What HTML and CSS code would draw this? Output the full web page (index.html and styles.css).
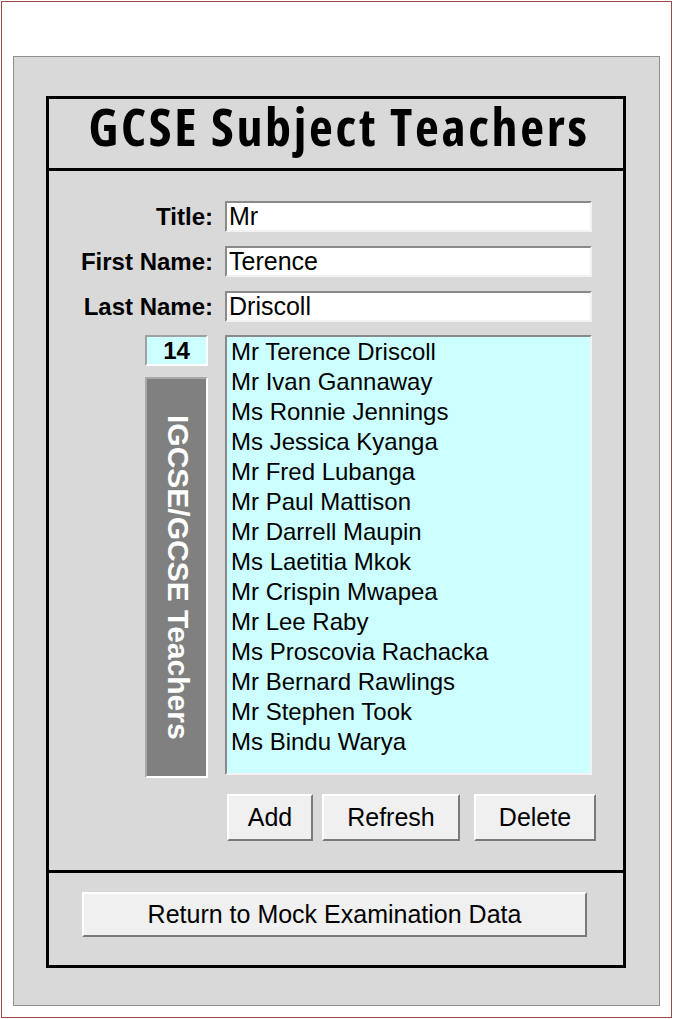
FILE: index.html
```html
<!DOCTYPE html>
<html lang="en">
<head>
  <meta charset="UTF-8" />
  <title>GCSE Subject Teachers</title>
  <link rel="stylesheet" href="styles.css">
</head>
<body>

  <div class="frame">
    <div class="panel">
      <div class="card">

        <!-- Header -->
        <div class="card-header">
          <h1>GCSE Subject Teachers</h1>
        </div>

        <!-- Teacher form -->
        <div class="card-body">
          <label class="field-label" for="title">Title:</label>
          <input class="field" id="title" type="text" value="Mr" />

          <label class="field-label" for="firstName">First Name:</label>
          <input class="field" id="firstName" type="text" value="Terence" />

          <label class="field-label" for="lastName">Last Name:</label>
          <input class="field" id="lastName" type="text" value="Driscoll" />

          <div class="side">
            <div class="count">14</div>
            <div class="side-label"><span>IGCSE/GCSE Teachers</span></div>
          </div>

          <ul class="teacher-list">
            <li>Mr Terence Driscoll</li>
            <li>Mr Ivan Gannaway</li>
            <li>Ms Ronnie Jennings</li>
            <li>Ms Jessica Kyanga</li>
            <li>Mr Fred Lubanga</li>
            <li>Mr Paul Mattison</li>
            <li>Mr Darrell Maupin</li>
            <li>Ms Laetitia Mkok</li>
            <li>Mr Crispin Mwapea</li>
            <li>Mr Lee Raby</li>
            <li>Ms Proscovia Rachacka</li>
            <li>Mr Bernard Rawlings</li>
            <li>Mr Stephen Took</li>
            <li>Ms Bindu Warya</li>
          </ul>

          <div class="actions">
            <button class="btn btn-add">Add</button>
            <button class="btn btn-refresh">Refresh</button>
            <button class="btn btn-delete">Delete</button>
          </div>
        </div>

        <!-- Footer -->
        <div class="card-footer">
          <button class="btn btn-return">Return to Mock Examination Data</button>
        </div>

      </div>
    </div>
  </div>

</body>
</html>
```

FILE: styles.css
```css
* {
  box-sizing: border-box;
  margin: 0;
  padding: 0;
}

body {
  font-family: "Liberation Sans", Arial, sans-serif;
  background: #fff;
  padding: 1px;
}

/* Window frame */
.frame {
  width: 671px;
  height: 1017px;
  border: 1px solid #9c4b4b;
  background: #fff;
  padding: 54px 0 0 11px;
}

.panel {
  width: 647px;
  height: 950px;
  border: 1px solid #8f8f8f;
  background: #d9d9d9;
  padding: 39px 0 0 32px;
}

.card {
  width: 580px;
  height: 872px;
  border: 3px solid #000;
  display: flex;
  flex-direction: column;
}

/* Header */
.card-header {
  height: 72px;
  border-bottom: 3px solid #000;
  display: flex;
  align-items: center;
  justify-content: center;
  padding-bottom: 16px;
}

.card-header h1 {
  font-family: "Open Sans", "Liberation Sans", sans-serif;
  font-stretch: 75%;
  font-weight: bold;
  font-size: 52px;
  letter-spacing: 2.65px;
  line-height: 1;
  white-space: nowrap;
  color: #000;
  padding-left: 6px;
}

/* Form body */
.card-body {
  flex-grow: 1;
  display: grid;
  grid-template-columns: 164px 367px;
  column-gap: 12px;
  row-gap: 14px;
  align-content: start;
  padding-top: 30px;
}

.field-label {
  font-weight: bold;
  font-size: 24px;
  color: #000;
  text-align: right;
  align-self: center;
}

.field {
  height: 31px;
  font-family: "Liberation Sans", Arial, sans-serif;
  font-size: 25px;
  padding: 0 2px;
  background: #fff;
  border: 2px solid;
  border-color: #8a8a8a #f2f2f2 #f2f2f2 #8a8a8a;
  outline: none;
  color: #000;
}

.side {
  width: 63px;
  justify-self: end;
  margin-right: 5px;
  margin-top: -1px;
  display: flex;
  flex-direction: column;
  gap: 11px;
}

.count {
  height: 31px;
  background: #ccffff;
  border: 2px solid;
  border-color: #a0a0a0 #fff #fff #a0a0a0;
  font-weight: bold;
  font-size: 24px;
  text-align: center;
  line-height: 27px;
}

.side-label {
  height: 401px;
  background: #808080;
  border: 2px solid;
  border-color: #a8a8a8 #fff #fff #a8a8a8;
  display: flex;
  align-items: center;
  justify-content: center;
}

.side-label span {
  writing-mode: vertical-rl;
  color: #fff;
  font-weight: bold;
  font-size: 30px;
  white-space: nowrap;
  margin-left: 2px;
}

.teacher-list {
  list-style: none;
  height: 440px;
  margin-top: -1px;
  background: #ccffff;
  border: 2px solid;
  border-color: #8a8a8a #f2f2f2 #f2f2f2 #8a8a8a;
  padding: 0 4px;
}

.teacher-list li {
  font-size: 24px;
  line-height: 30px;
  color: #000;
}

.actions {
  grid-column: 2;
  display: flex;
  margin-top: 2px;
  padding-left: 2px;
}

/* Buttons */
.btn {
  font-family: "Liberation Sans", Arial, sans-serif;
  font-size: 25px;
  color: #000;
  background: #f0f0f0;
  border: 2px solid;
  border-color: #fff #7a7a7a #7a7a7a #fff;
  cursor: pointer;
  flex-shrink: 0;
}

.btn-add {
  width: 86px;
  height: 47px;
}

.btn-refresh {
  width: 138px;
  height: 47px;
  margin-left: 9px;
}

.btn-delete {
  width: 122px;
  height: 47px;
  margin-left: 14px;
}

/* Footer */
.card-footer {
  height: 95px;
  border-top: 3px solid #000;
  padding: 19px 0 0 33px;
}

.btn-return {
  width: 505px;
  height: 45px;
}
```
